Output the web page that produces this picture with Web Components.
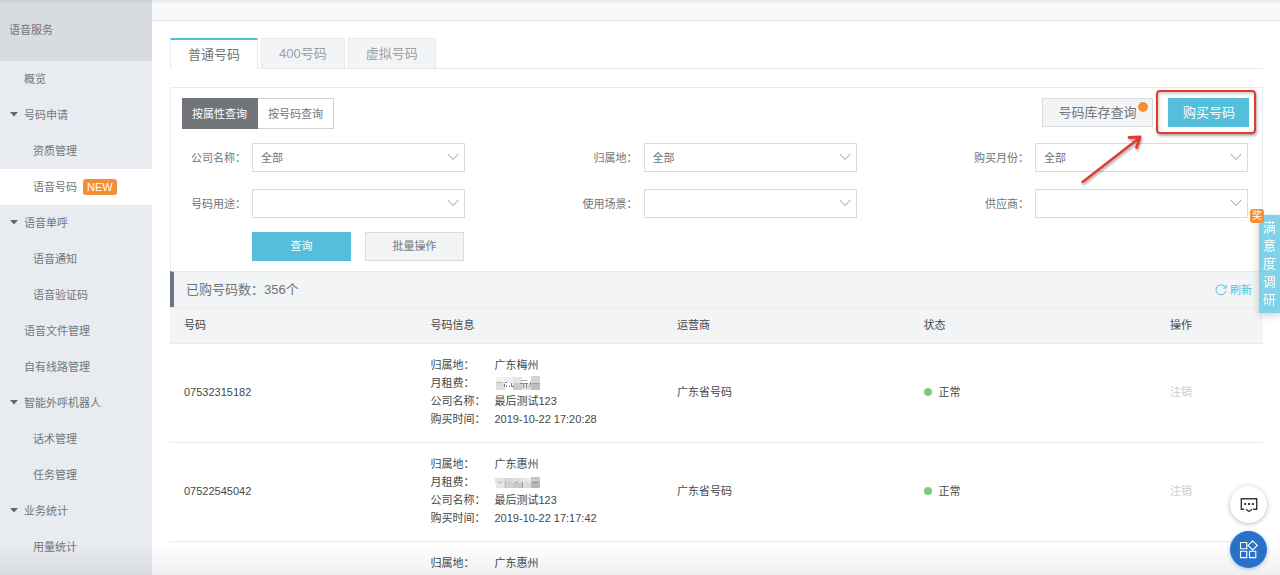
<!DOCTYPE html>
<html lang="zh-CN">
<head>
<meta charset="utf-8">
<title>语音号码</title>
<style>
  html, body { margin: 0; height: 100%; }
  body {
    font: 11px/18px "Liberation Sans", "Noto Sans CJK SC", sans-serif;
    color: #6f7478; background: #fff; overflow: hidden;
    --teal: #54bedb; --line: #e8eaec; --soft: #f3f4f6; --orange: #f28f38; --ink: #44484c;
  }
</style>
</head>
<body>
<voice-console></voice-console>
<script>
const define = (name, html, setup) => {
  const template = document.createElement('template');
  template.innerHTML = html;
  customElements.define(name, class extends HTMLElement {
    connectedCallback() {
      if (this.shadowRoot) return;
      const root = this.attachShadow({ mode: 'open' });
      root.append(template.content.cloneNode(true));
      if (setup) setup(this, root);
    }
  });
};

/* Sidebar entry; attributes: sub, group, active */
define('side-item', `
<style>
  :host { display: block; }
  a { display: flex; align-items: center; height: 36px; padding-left: 24px; box-sizing: border-box;
      position: relative; color: #72777b; text-decoration: none; white-space: nowrap; }
  :host([sub]) a { padding-left: 33px; }
  :host([active]) a { background: #fff; }
  svg { display: none; position: absolute; left: 10px; top: 15px; }
  :host([group]) svg { display: block; }
</style>
<a href="#"><svg width="8" height="5" viewBox="0 0 8 5"><path d="M0 0h8L4 4.500z" fill="#62676b"/></svg><slot></slot></a>`);

define('new-badge', `
<style>
  :host { display: block; margin-left: 6px; padding: 0 4px; line-height: 16px; border-radius: 3px; background: var(--orange); color: #fff; }
</style><slot></slot>`);

define('side-nav', `
<style>
  :host { display: block; flex: none; width: 152px; background: #e8ebf0; }
  h1 { margin: 0; padding: 0 9px; height: 61px; line-height: 60px; font-size: 11px; font-weight: 400; background: #d8dbe0; }
</style>
<h1>语音服务</h1>
<nav><slot></slot></nav>`);

define('tab-item', `
<style>
  :host { display: block; }
  button { display: block; font: inherit; font-size: 13px; line-height: 28px; height: 30px; padding: 0 17px; margin: 0;
    color: #9c9fa3; background: var(--soft); border: 1px solid var(--line); border-bottom: 0; white-space: nowrap; }
  :host([active]) button { height: 31px; color: #6f7478; background: #fff; border-top: 2px solid var(--teal); margin-bottom: -1px; }
</style>
<button type="button"><slot></slot></button>`);

define('tab-bar', `
<style>:host { display: flex; gap: 3px; border-bottom: 1px solid var(--line); }</style><slot></slot>`);

/* Button; attributes: primary, large, wide, dot */
define('ui-button', `
<style>
  :host { display: block; position: relative; }
  button { display: block; box-sizing: border-box; height: 29px; width: 100%; padding: 0 14px; font: inherit; line-height: 27px;
    color: #72777b; background: var(--soft); border: 1px solid #d9dbdd; white-space: nowrap; }
  :host([wide]) { width: 99px; }
  :host([large]) button { font-size: 13px; }
  :host([primary]) button { color: #fff; background: var(--teal); border-color: var(--teal); }
  i { display: none; position: absolute; right: 5px; top: 4px; width: 10px; height: 10px; border-radius: 50%; background: var(--orange); }
  :host([dot]) i { display: block; }
</style>
<button type="button"><slot></slot></button><i></i>`);

define('query-switch', `
<style>
  :host { display: flex; }
  button { width: 76px; height: 31px; padding: 0; font: inherit; color: #72777b; background: #fff; border: 1px solid #cfd1d3; border-left: 0; }
  button[aria-pressed="true"] { color: #fff; background: #717579; border-color: #717579; }
</style>
<button type="button" aria-pressed="true">按属性查询</button><button type="button" aria-pressed="false">按号码查询</button>`);

define('select-field', `
<style>
  :host { display: flex; align-items: center; position: relative; }
  label { width: 64px; padding-right: 6px; box-sizing: border-box; text-align: right; white-space: nowrap; }
  select { appearance: none; width: 213px; height: 29px; padding: 0 8px; font: inherit; color: #6f7478; background: #fff;
    border: 1px solid #d9dbdd; border-radius: 0; }
  svg { position: absolute; right: 6px; top: 10px; pointer-events: none; }
</style>
<label for="s"></label><select id="s"><option></option></select>
<svg width="12" height="8" viewBox="0 0 12 8" fill="none" stroke="#95999c"><path d="M.7.9 6 6.500 11.300.9"/></svg>`,
(el, root) => {
  root.querySelector('label').textContent = el.getAttribute('label');
  root.querySelector('option').textContent = el.getAttribute('value') || '';
});

/* Red frame and arrow drawn over the control that is slotted in */
define('call-out', `
<style>
  :host { display: block; position: relative; z-index: 1; }
  .frame { position: absolute; inset: -8px -7px -7px -12px; border: 2px solid #e23a2c; border-radius: 4px; box-shadow: 1px 2px 3px #0005, inset 1px 2px 3px #0003; pointer-events: none; }
  svg { position: absolute; left: -90px; top: 34px; pointer-events: none; filter: drop-shadow(1px 2px 1px #0005); }
</style>
<slot></slot><div class="frame"></div>
<svg width="68" height="56" viewBox="0 0 68 56" fill="none" stroke="#e23a2c" stroke-linecap="round" stroke-linejoin="round">
<path d="M4.500 50 60 7" stroke-width="2.400"/><path d="M51 5.500 62 5 58.500 15.500" stroke-width="2.800"/></svg>`);

define('query-panel', `
<style>
  :host { display: block; border: 1px solid var(--line); border-bottom: 0; padding: 10px 13px 10px 11px; }
  .top, .right, .actions { display: flex; align-items: flex-start; }
  .top { justify-content: space-between; }
  .right { gap: 15px; }
  .fields { display: grid; grid-template-columns: repeat(3, auto); justify-content: space-between; row-gap: 17px; margin: 14px 1px 14px 6px; }
  .actions { gap: 14px; padding-left: 70px; }
</style>
<div class="top"><query-switch></query-switch>
  <div class="right"><ui-button large dot style="width:111px">号码库存查询</ui-button><call-out><ui-button large primary style="width:81px">购买号码</ui-button></call-out></div>
</div>
<div class="fields">
  <select-field label="公司名称：" value="全部"></select-field>
  <select-field label="归属地：" value="全部"></select-field>
  <select-field label="购买月份：" value="全部"></select-field>
  <select-field label="号码用途："></select-field>
  <select-field label="使用场景："></select-field>
  <select-field label="供应商："></select-field>
</div>
<div class="actions"><ui-button wide primary>查询</ui-button><ui-button wide>批量操作</ui-button></div>`);

define('count-bar', `
<style>
  :host { display: flex; align-items: center; justify-content: space-between; height: 35px; padding: 0 11px 0 12px;
    background: var(--soft); border-left: 4px solid #6c757e; border-top: 1px solid var(--line); }
  b { font-weight: 400; font-size: 13px; }
  a { display: flex; align-items: center; gap: 3px; color: var(--teal); text-decoration: none; }
</style>
<b>已购号码数：356个</b>
<a href="#"><svg width="12" height="12" viewBox="0 0 12 12" fill="none" stroke="currentColor"><path d="M10.900 6.700A5 5 0 1 1 9.600 2.400L11 3.900"/><path d="M11.200.8v3.300H8"/></svg>刷新</a>`);

/* Pixelated strip that hides the rent */
define('rent-mask', `
<style>:host { display: block; height: 18px; } svg { display: block; padding-top: 2px; }</style>
<svg width="46" height="15" viewBox="0 0 46 15" role="img" aria-label="已隐藏" shape-rendering="crispEdges"></svg>`,
(el, root) => {
  const svg = root.querySelector('svg');
  const rect = (x, y, w, h, fill) => {
    const r = document.createElementNS('http://www.w3.org/2000/svg', 'rect');
    Object.entries({ x, y, width: w, height: h, fill }).forEach(([k, v]) => r.setAttribute(k, v));
    svg.append(r);
  };
  const first = el.hasAttribute('first');
  (first
    ? [[1,1,8,6,'#f1f1f1'],[1,7,9,7,'#dedede'],[9,1,9,6,'#eee'],[18,1,9,6,'#e4e4e4'],[18,7,9,7,'#cbcbcb'],[27,7,9,7,'#e3e3e3'],[36,0,9,7,'#d5d5d5'],[36,7,9,7,'#bdbdbd'],
       [1,6,7,1,'#bbb'],[9,8,1,3,'#777'],[10,6,2,1,'#888'],[11,9,1,2,'#777'],[14,10,1,1,'#777'],[16,7,1,4,'#888'],[17,10,2,1,'#777'],[26,4,6,1,'#aaa'],[25,7,8,1,'#888'],[28,8,1,4,'#888'],[31,8,1,4,'#888'],[35,6,1,3,'#888'],[34,9,1,3,'#aaa'],[38,7,6,1,'#999']]
    : [[0,3,9,5,'#e2e2e2'],[9,3,9,5,'#d7d7d7'],[18,3,9,5,'#dedede'],[27,3,9,5,'#e8e8e8'],[36,2,9,5,'#c6c6c6'],[1,8,8,5,'#e4e4e4'],[9,8,9,5,'#d0d0d0'],[18,8,9,5,'#c7c7c7'],[27,8,9,5,'#dcdcdc'],[36,7,9,6,'#b8b8b8'],
       [3,7,3,1,'#aaa'],[10,6,1,6,'#bbb'],[13,7,2,1,'#aaa'],[20,7,3,1,'#999'],[27,7,1,6,'#999'],[31,7,1,1,'#aaa'],[38,7,5,1,'#888']]
  ).forEach(a => rect(...a));
});

define('number-table', `
<style>
  :host { display: block; color: var(--ink); }
  table { width: 100%; table-layout: fixed; border-collapse: separate; border-spacing: 0; }
  th, td { text-align: left; font-weight: 400; padding: 0 0 0 14px; border-bottom: 1px solid var(--line); }
  th { height: 33px; padding-bottom: 2px; background: var(--soft); border-top: 1px solid var(--line); }
  th:last-child { width: 93px; }
  td { padding-top: 12px; padding-bottom: 14px; }
  dl { margin: 0; display: grid; grid-template-columns: 64px 1fr; grid-auto-rows: 18px; white-space: nowrap; }
  dd { margin: 0; }
  .state { display: flex; align-items: center; gap: 7px; }
  .state::before { content: ""; width: 8px; height: 8px; border-radius: 50%; background: #80ca83; }
  button { padding: 0; border: 0; background: none; font: inherit; color: #c9cbcd; }
</style>
<table>
  <thead><tr><th>号码</th><th>号码信息</th><th>运营商</th><th>状态</th><th>操作</th></tr></thead>
  <tbody>
    <tr><td>07532315182</td><td><dl><dt>归属地：</dt><dd>广东梅州</dd><dt>月租费：</dt><dd><rent-mask first></rent-mask></dd><dt>公司名称：</dt><dd>最后测试123</dd><dt>购买时间：</dt><dd>2019-10-22 17:20:28</dd></dl></td><td>广东省号码</td><td><div class="state">正常</div></td><td><button type="button" disabled>注销</button></td></tr>
    <tr><td>07522545042</td><td><dl><dt>归属地：</dt><dd>广东惠州</dd><dt>月租费：</dt><dd><rent-mask></rent-mask></dd><dt>公司名称：</dt><dd>最后测试123</dd><dt>购买时间：</dt><dd>2019-10-22 17:17:42</dd></dl></td><td>广东省号码</td><td><div class="state">正常</div></td><td><button type="button" disabled>注销</button></td></tr>
    <tr><td></td><td><dl><dt>归属地：</dt><dd>广东惠州</dd></dl></td><td></td><td></td><td></td></tr>
  </tbody>
</table>`);

define('survey-tab', `
<style>
  :host { position: fixed; right: 0; top: 215px; z-index: 2; }
  a { display: block; width: 13px; padding: 4px; line-height: 18px; font-size: 13px; text-align: center; color: #fff; background: #7fd2e7;
    text-decoration: none; box-shadow: 0 2px 8px #0003; word-break: break-all; }
  span { position: absolute; left: -9px; top: -6px; width: 14px; height: 14px; border-radius: 3px; background: var(--orange);
    color: #fff; font-size: 10px; line-height: 14px; text-align: center; }
</style>
<a href="#">满意度调研</a><span>奖</span>`);

define('float-tools', `
<style>
  :host { position: fixed; right: 13px; bottom: 7px; display: grid; gap: 8px; z-index: 3; }
  button { width: 37px; height: 37px; padding: 0; border: 0; border-radius: 50%; background: #fff; display: grid; place-items: center; box-shadow: 0 1px 5px #0004; }
  button + button { background: #2970c8; box-shadow: 0 1px 4px #2970c866; }
</style>
<button type="button" aria-label="咨询"><svg width="18" height="16" viewBox="0 0 18 16" fill="none" stroke="#34383c" stroke-width="1.400"><path d="M4 12.300H1.300V1.700h15.400v10.600H13M6 12.300l3 2.200 3-2.200"/><path d="M4.200 7h2M8 7h2M11.800 7h2" stroke-width="2"/></svg></button>
<button type="button" aria-label="应用"><svg width="19" height="19" viewBox="0 0 19 19" fill="none" stroke="#fff" stroke-width="1.100"><path d="M1.500 2.500h6.300v6.300H1.500zM1.500 11.300h6.300v6.300H1.500zM10.500 11.300h6.300v6.300h-6.300zM13.700.8 18.300 5.400 13.700 10 9.100 5.400z"/></svg></button>`);

define('voice-console', `
<style>
  :host { display: flex; height: 100vh; overflow: hidden; }
  main { flex: 1; min-width: 0; }
  .bar { height: 20px; background: #f8f9fb; border-bottom: 1px solid #e5e7ea; }
  .content { padding: 17px 17px 0 18px; }
  query-panel { margin-top: 18px; }
  .edge { position: fixed; left: 0; right: 0; bottom: 0; height: 30px; background: linear-gradient(#0000, #00000010); pointer-events: none; }
  .edge.up { top: 0; bottom: auto; height: 4px; background: linear-gradient(#00000012, #0000); }
</style>
<side-nav>
  <side-item>概览</side-item>
  <side-item group>号码申请</side-item>
  <side-item sub>资质管理</side-item>
  <side-item sub active>语音号码<new-badge>NEW</new-badge></side-item>
  <side-item group>语音单呼</side-item>
  <side-item sub>语音通知</side-item>
  <side-item sub>语音验证码</side-item>
  <side-item>语音文件管理</side-item>
  <side-item>自有线路管理</side-item>
  <side-item group>智能外呼机器人</side-item>
  <side-item sub>话术管理</side-item>
  <side-item sub>任务管理</side-item>
  <side-item group>业务统计</side-item>
  <side-item sub>用量统计</side-item>
</side-nav>
<main>
  <div class="bar"></div>
  <div class="content">
    <tab-bar><tab-item active>普通号码</tab-item><tab-item>400号码</tab-item><tab-item>虚拟号码</tab-item></tab-bar>
    <query-panel></query-panel>
    <count-bar></count-bar>
    <number-table></number-table>
  </div>
</main>
<div class="edge up"></div><div class="edge"></div>
<survey-tab></survey-tab>
<float-tools></float-tools>`);
</script>
</body>
</html>
